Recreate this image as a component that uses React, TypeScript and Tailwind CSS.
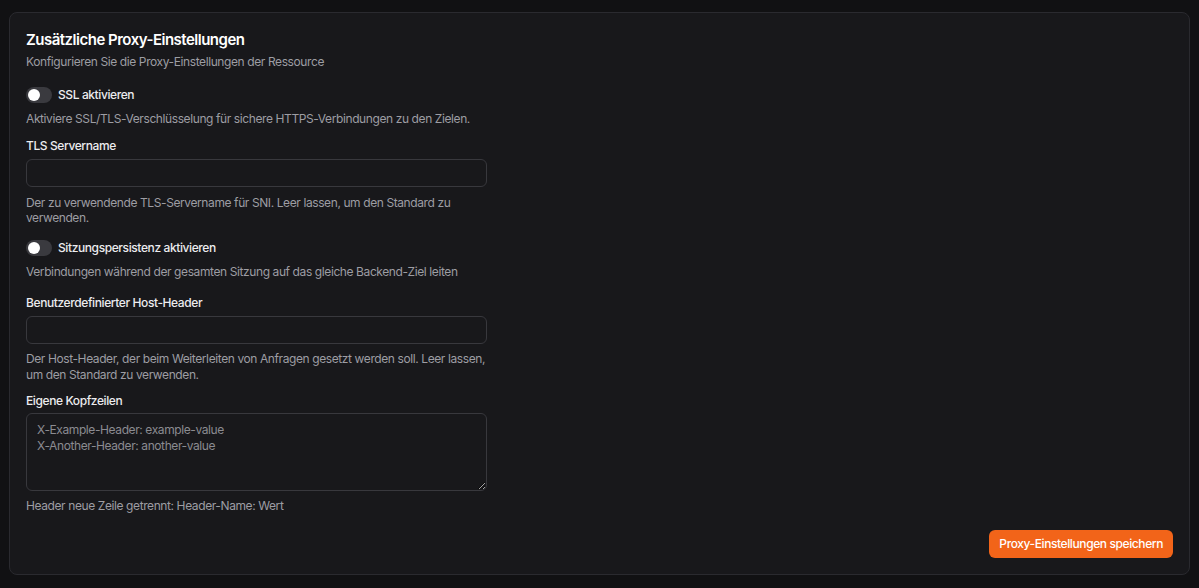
import React from 'react';

const Toggle: React.FC<{ label: string }> = ({ label }) => (
  <div className="flex h-5 items-center gap-1.5">
    <button
      type="button"
      className="flex h-4 w-[26px] items-center rounded-full bg-[#3a3a3f] px-[2px]"
      aria-pressed="false"
    >
      <span className="h-3 w-3 rounded-full bg-white" />
    </button>
    <span className="text-xs font-medium leading-5 tracking-[-0.4px] text-[#ececef]">{label}</span>
  </div>
);

const Help: React.FC<{ children: React.ReactNode; className?: string }> = ({ children, className }) => (
  <p className={`text-xs leading-4 tracking-[-0.4px] text-[#9d9da3] ${className ?? ''}`}>{children}</p>
);

const Label: React.FC<{ children: React.ReactNode; className?: string }> = ({ children, className }) => (
  <label className={`block text-xs font-medium leading-5 tracking-[-0.4px] text-[#ececef] ${className ?? ''}`}>
    {children}
  </label>
);

const inputCls =
  'block h-7 w-[461px] rounded-md border border-[#38383d] bg-[#18181b] px-2.5 text-xs text-white outline-none';

const App: React.FC = () => {
  return (
    <div
      className="min-h-screen bg-[#111113] pb-3 pl-[9px] pr-[9px] pt-3"
      style={{ fontFamily: 'Inter, "Noto Sans", sans-serif' }}
    >
      <div className="rounded-lg border border-[#2a2a2f] bg-[#18181b] px-4 pb-4 pt-[15px]">
        <h2 className="text-[15px] font-semibold leading-6 tracking-[-0.5px] text-white">
          Zusätzliche Proxy-Einstellungen
        </h2>
        <p className="mt-[2px] text-xs leading-4 tracking-[-0.4px] text-[#9d9da3]">
          Konfigurieren Sie die Proxy-Einstellungen der Ressource
        </p>

        <div className="mt-[15px]">
          <Toggle label="SSL aktivieren" />
        </div>
        <Help className="mt-1.5">Aktiviere SSL/TLS-Verschlüsselung für sichere HTTPS-Verbindungen zu den Zielen.</Help>

        <Label className="mt-[9px]">TLS Servername</Label>
        <input className={`${inputCls} mt-[3px]`} />
        <Help className="mt-2 w-[461px] leading-[15px]">
          Der zu verwendende TLS-Servername für SNI. Leer lassen, um den Standard zu verwenden.
        </Help>

        <div className="mt-[13px]">
          <Toggle label="Sitzungspersistenz aktivieren" />
        </div>
        <Help className="mt-1.5">Verbindungen während der gesamten Sitzung auf das gleiche Backend-Ziel leiten</Help>

        <Label className="mt-[13px]">Benutzerdefinierter Host-Header</Label>
        <input className={`${inputCls} mt-[3px]`} />
        <Help className="mt-[7px] w-[461px]">
          Der Host-Header, der beim Weiterleiten von Anfragen gesetzt werden soll. Leer lassen, um den Standard zu
          verwenden.
        </Help>

        <Label className="mt-2">Eigene Kopfzeilen</Label>
        <textarea
          className="mt-[2px] block h-[78px] w-[461px] rounded-md border border-[#38383d] bg-[#18181b] px-2.5 py-2 text-xs leading-4 tracking-[-0.4px] text-white outline-none placeholder:text-[#8b8b91]"
          placeholder={'X-Example-Header: example-value\nX-Another-Header: another-value'}
        />
        <Help className="mt-[7px]">Header neue Zeile getrennt: Header-Name: Wert</Help>

        <div className="mt-4 flex justify-end">
          <button
            type="button"
            className="h-7 rounded-md bg-[#f26419] px-2.5 text-xs font-medium tracking-[-0.4px] text-white"
          >
            Proxy-Einstellungen speichern
          </button>
        </div>
      </div>
    </div>
  );
};

export default App;
